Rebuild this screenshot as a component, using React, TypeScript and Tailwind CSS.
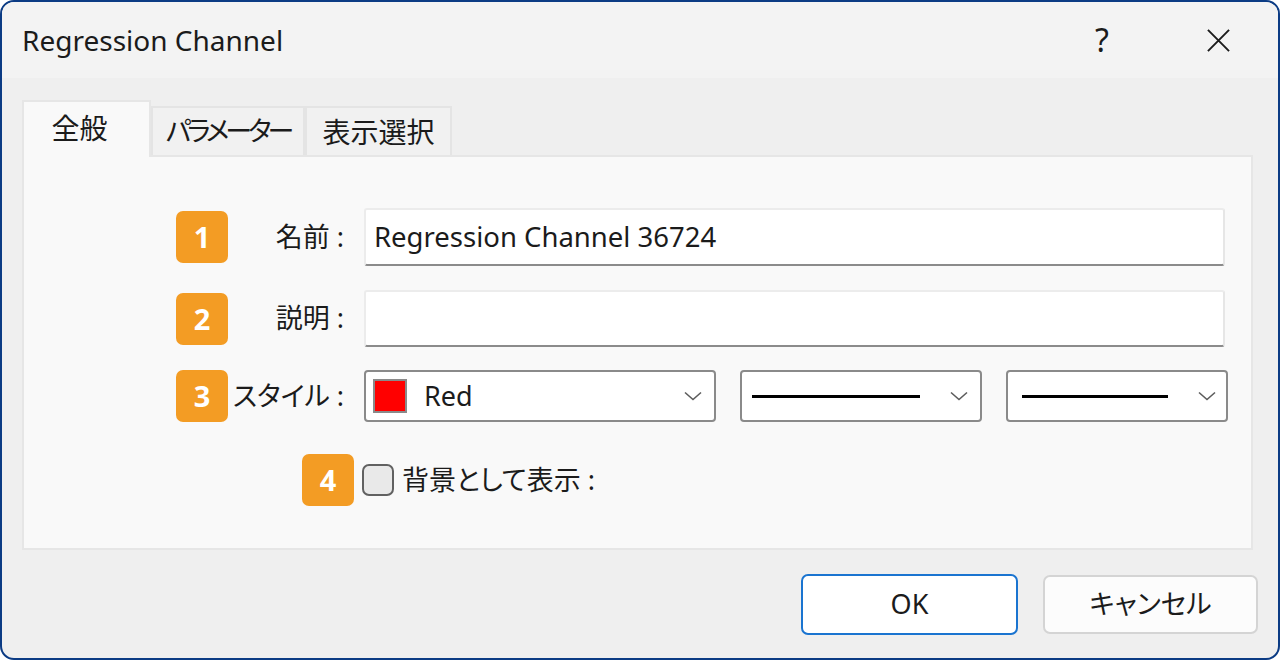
import React from "react"

const font = { fontFamily: '"Noto Sans", "Noto Sans CJK JP", sans-serif' }

function Badge({ n }: { n: string }) {
  return (
    <div className="flex h-[52px] w-[52px] shrink-0 items-center justify-center rounded-[7px] bg-[#f39c24] text-[29px] font-bold text-white">
      {n}
    </div>
  )
}

function Chevron() {
  return (
    <svg width="18" height="10" viewBox="0 0 18 10" className="shrink-0">
      <path d="M1 1.5 L9 8.5 L17 1.5" fill="none" stroke="#5c5c5c" strokeWidth="1.6" />
    </svg>
  )
}

function Label({ text }: { text: string }) {
  return (
    <div className="w-[136px] shrink-0 whitespace-nowrap pr-[20px] text-right text-[27px] text-[#1b1b1b] [font-feature-settings:'palt']">
      {text}
    </div>
  )
}

export default function App() {
  return (
    <div style={font} className="h-[660px] w-[1280px] bg-white">
      <div className="flex h-full w-full flex-col overflow-hidden rounded-[14px] border-2 border-[#0b3b84] bg-[#efefef]">
        {/* Title bar */}
        <div className="flex h-[76px] shrink-0 items-center justify-between bg-[#f3f3f3] pl-[20px] pr-[47px]">
          <span className="text-[28px] text-[#1b1b1b]">Regression Channel</span>
          <div className="flex items-center gap-[97px]">
            <span className="text-[32px] text-[#1b1b1b]">?</span>
            <svg width="25" height="25" viewBox="0 0 26 26">
              <path d="M2 2 L24 24 M24 2 L2 24" stroke="#1b1b1b" strokeWidth="2" />
            </svg>
          </div>
        </div>

        {/* Tabs */}
        <div className="mt-[22px] flex items-end whitespace-nowrap pl-[20px] text-[28px] text-[#1b1b1b] [font-feature-settings:'palt']">
          <div className="relative z-10 -mb-[2px] flex h-[57px] w-[129px] items-start justify-center border-2 border-b-0 border-[#e6e6e6] bg-[#f9f9f9] pt-[5px] pr-[14px]">
            全般
          </div>
          <div className="flex h-[49px] w-[154px] items-center justify-center border-2 border-b-0 border-[#e4e4e4] bg-[#f1f1f1] text-[27px] tracking-[-4px]">
            パラメーター
          </div>
          <div className="flex h-[49px] w-[147px] items-center justify-center border-2 border-b-0 border-[#e4e4e4] bg-[#f1f1f1]">
            表示選択
          </div>
        </div>

        {/* Panel */}
        <div className="ml-[20px] flex h-[395px] w-[1231px] flex-col border-2 border-[#e6e6e6] bg-[#f9f9f9] pt-[51px]">
          <div className="flex h-[58px] items-center pl-[152px]">
            <Badge n="1" />
            <Label text="名前 :" />
            <div className="flex h-[58px] w-[861px] items-center rounded-[3px] border-2 border-b-[#8b8b8b] border-l-[#ececec] border-r-[#e6e6e6] border-t-[#ececec] bg-white pl-[8px] text-[27.5px] text-[#1b1b1b]">
              Regression Channel 36724
            </div>
          </div>

          <div className="mt-[24px] flex h-[57px] items-center pl-[152px]">
            <Badge n="2" />
            <Label text="説明 :" />
            <div className="h-[57px] w-[861px] rounded-[3px] border-2 border-b-[#8b8b8b] border-l-[#ececec] border-r-[#e6e6e6] border-t-[#ececec] bg-white" />
          </div>

          <div className="mt-[23px] flex h-[52px] items-center pl-[152px]">
            <Badge n="3" />
            <Label text="スタイル :" />
            <div className="flex h-[52px] w-[352px] items-center rounded-[4px] border-2 border-[#8a8a8a] bg-white pl-[7px] pr-[12px]">
              <div className="h-[34px] w-[34px] shrink-0 border-2 border-[#8a8a8a] bg-[#ff0000]" />
              <span className="ml-[17px] flex-1 text-[27px] text-[#1b1b1b]">Red</span>
              <Chevron />
            </div>
            <div className="ml-[24px] flex h-[52px] w-[242px] items-center rounded-[4px] border-2 border-[#8a8a8a] bg-white pl-[10px] pr-[12px]">
              <div className="h-[3px] w-[168px] bg-black" />
              <div className="flex-1" />
              <Chevron />
            </div>
            <div className="ml-[24px] flex h-[52px] w-[222px] items-center rounded-[4px] border-2 border-[#8a8a8a] bg-white pl-[14px] pr-[10px]">
              <div className="h-[3px] w-[146px] bg-black" />
              <div className="flex-1" />
              <Chevron />
            </div>
          </div>

          <div className="mt-[32px] flex h-[52px] items-center pl-[278px]">
            <Badge n="4" />
            <div className="ml-[8px] h-[32px] w-[32px] shrink-0 rounded-[7px] border-2 border-[#616161] bg-[#e9e9e9]" />
            <span className="ml-[8px] text-[27px] text-[#1b1b1b] [font-feature-settings:'palt']">背景として表示 :</span>
          </div>
        </div>

        {/* Buttons */}
        <div className="mt-[24px] flex items-start justify-end gap-[25px] pr-[20px] text-[27px] text-[#1b1b1b] [font-feature-settings:'palt']">
          <div className="flex h-[61px] w-[217px] items-center justify-center rounded-[7px] border-2 border-[#1a74d0] bg-white">
            OK
          </div>
          <div className="mt-[1px] flex h-[59px] w-[215px] items-center justify-center rounded-[7px] border-2 border-[#d4d4d4] bg-[#fcfcfc]">
            キャンセル
          </div>
        </div>
      </div>
    </div>
  )
}
